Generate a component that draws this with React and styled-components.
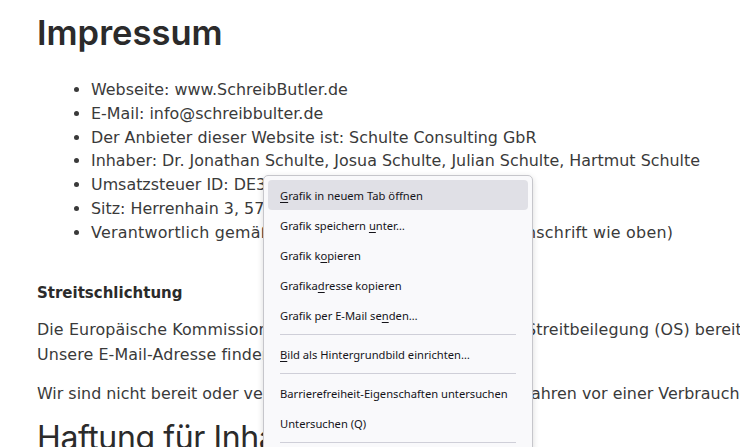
import React from "react";
import styled, { createGlobalStyle } from "styled-components";

const GlobalStyle = createGlobalStyle`
  html, body {
    margin: 0;
    padding: 0;
    background: #ffffff;
    overflow: hidden;
    width: 740px;
    height: 447px;
  }
`;

const Page = styled.div`
  position: relative;
  width: 740px;
  height: 447px;
  overflow: hidden;
  padding: 14px 0 0 37px;
  box-sizing: border-box;
  font-family: "DejaVu Sans", "Open Sans", sans-serif;
  color: #3a3a3a;
`;

const Heading = styled.h1`
  font-family: Inter, "DejaVu Sans", sans-serif;
  font-size: 34.5px;
  font-weight: 600;
  margin: 0;
  line-height: 38px;
  color: #2b2b2b;
  white-space: nowrap;
`;

const List = styled.ul`
  margin: 26px 0 0 0;
  padding-left: 54px;
  font-size: 15.9px;
  line-height: 23.8px;
  white-space: nowrap;
`;

const ListItem = styled.li`
  letter-spacing: ${(p) => p.$ls || 0}px;
`;

const SubHeading = styled.h4`
  font-size: 15px;
  font-weight: 700;
  margin: 36px 0 0 0;
  line-height: 24px;
  color: #2b2b2b;
`;

const Para = styled.p`
  font-size: 15.9px;
  line-height: 25px;
  margin: ${(p) => p.$top || 12}px 0 0 0;
  letter-spacing: ${(p) => p.$ls || 0}px;
  white-space: nowrap;
`;

const Heading2 = styled(Heading)`
  font-size: 32px;
  font-weight: 400;
  letter-spacing: -0.4px;
  margin-top: 13px;
`;

const Menu = styled.div`
  position: absolute;
  left: 263px;
  top: 175px;
  width: 270px;
  padding: 4px;
  box-sizing: border-box;
  background: #f9f9fb;
  border: 1px solid #c6c6cb;
  border-radius: 5px;
  box-shadow: 0 2px 6px rgba(0, 0, 0, 0.15);
  font-family: "Noto Sans", "Open Sans", sans-serif;
  font-size: 11.2px;
  color: #15141a;
`;

const Item = styled.div`
  height: 30px;
  display: flex;
  align-items: center;
  padding-left: 12px;
  border-radius: 4px;
  background: ${(p) => (p.$active ? "#e0e0e6" : "transparent")};
  white-space: nowrap;

  u {
    text-decoration: underline;
    text-underline-offset: 2px;
  }
`;

const Separator = styled.div`
  height: 1px;
  background: #cfcfd8;
  margin: 4px 12px 4px 12px;
`;

export default function App() {
  return (
    <Page>
      <GlobalStyle />
      <Heading>Impressum</Heading>
      <List>
        <ListItem>Webseite: www.SchreibButler.de</ListItem>
        <ListItem>E-Mail: info@schreibbulter.de</ListItem>
        <ListItem>Der Anbieter dieser Website ist: Schulte Consulting GbR</ListItem>
        <ListItem>Inhaber: Dr. Jonathan Schulte, Josua Schulte, Julian Schulte, Hartmut Schulte</ListItem>
        <ListItem>Umsatzsteuer ID: DE321456789</ListItem>
        <ListItem>Sitz: Herrenhain 3, 57578 Elkenroth</ListItem>
        <ListItem $ls={0.24}>Verantwortlich gemäß § 55 RStV: Jonathan Schulte (Anschrift wie oben)</ListItem>
      </List>
      <SubHeading>Streitschlichtung</SubHeading>
      <Para $top={12} $ls={0.1}>
        Die Europäische Kommission stellt eine Plattform zur Online-Streitbeilegung (OS) bereit: https://ec.europa.eu/consumers/odr.
        <br />
        Unsere E-Mail-Adresse finden Sie oben im Impressum.
      </Para>
      <Para $top={14}>
        Wir sind nicht bereit oder verpflichtet, an Streitbeilegungsverfahren vor einer Verbraucherschlichtungsstelle teilzunehmen.
      </Para>
      <Heading2>Haftung für Inhalte</Heading2>

      <Menu>
        <Item $active>
          <span><u>G</u>rafik in neuem Tab öffnen</span>
        </Item>
        <Item>
          <span>Grafik speichern <u>u</u>nter…</span>
        </Item>
        <Item>
          <span>Grafik k<u>o</u>pieren</span>
        </Item>
        <Item>
          <span>Grafika<u>d</u>resse kopieren</span>
        </Item>
        <Item>
          <span>Grafik per E-Mail se<u>n</u>den…</span>
        </Item>
        <Separator />
        <Item>
          <span><u>B</u>ild als Hintergrundbild einrichten…</span>
        </Item>
        <Separator />
        <Item>
          <span>Barrierefreiheit-Eigenschaften untersuchen</span>
        </Item>
        <Item>
          <span>Untersuchen (Q)</span>
        </Item>
        <Separator />
        <Item>
          <span>Screenshot aufnehmen</span>
        </Item>
      </Menu>
    </Page>
  );
}
